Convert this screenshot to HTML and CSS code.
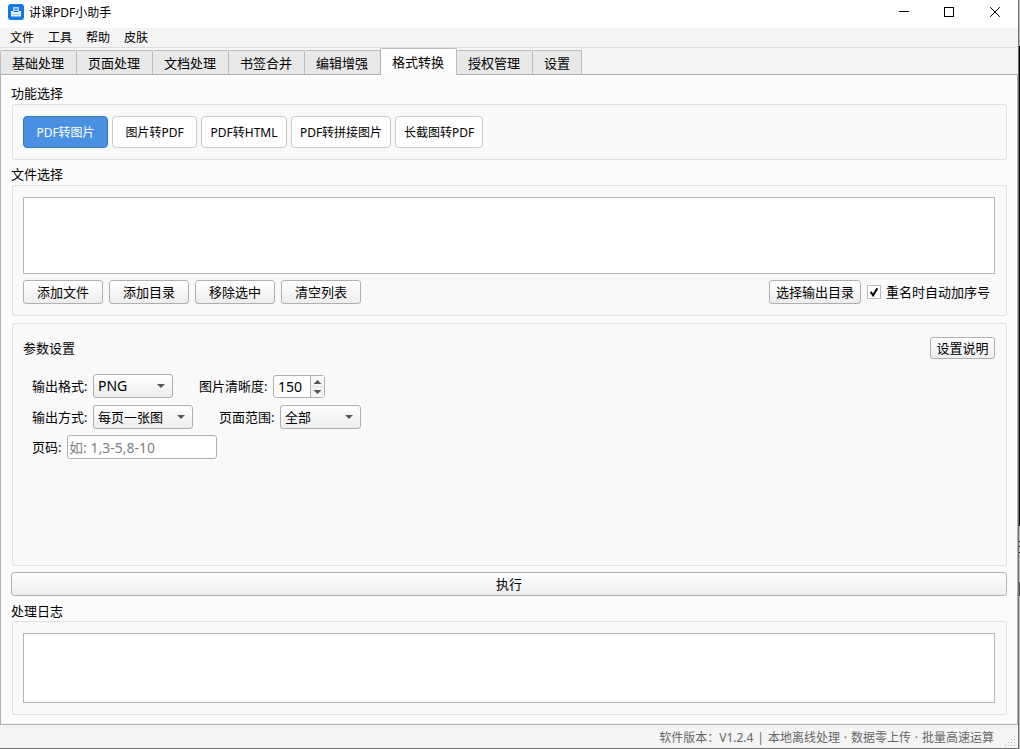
FILE: index.html
```
<!DOCTYPE html>
<html lang="zh-CN">
<head>
    <meta charset="UTF-8">
    <meta name="viewport" content="width=device-width, initial-scale=1.0">
    <title>讲课PDF小助手</title>
    <link rel="stylesheet" href="styles.css">
</head>
<body>
    <div class="window">
        <header class="titlebar">
            <svg class="app-icon" width="16" height="16" viewBox="0 0 16 16">
                <rect width="16" height="16" rx="3" fill="#1479e0"/>
                <path d="M5 3h6v4H5z" fill="#a9d2fa"/>
                <path d="M3 7h2.5v1h5V7H13v5.5H3z" fill="#e6f2fe"/>
                <path d="M6.5 5h3" stroke="#1479e0" fill="none"/>
                <path d="M4 10.5h8" stroke="#9ccaf8" fill="none"/>
            </svg>
            <span class="title">讲课PDF小助手</span>
            <svg class="controls" width="102" height="10" viewBox="0 0 102 10" fill="none" stroke="#000">
                <path d="M0 4.5h10M45.5.5h9v9h-9z" shape-rendering="crispEdges"/>
                <path d="M91.2.2l9.6 9.6M100.8.2l-9.6 9.6"/>
            </svg>
        </header>

        <nav class="menubar">
            <span>文件</span>
            <span>工具</span>
            <span>帮助</span>
            <span>皮肤</span>
        </nav>

        <div class="tabs">
            <div class="tab">基础处理</div>
            <div class="tab">页面处理</div>
            <div class="tab">文档处理</div>
            <div class="tab">书签合并</div>
            <div class="tab">编辑增强</div>
            <div class="tab active">格式转换</div>
            <div class="tab">授权管理</div>
            <div class="tab">设置</div>
        </div>

        <main class="pane">
            <div class="group-title">功能选择</div>
            <section class="group functions">
                <button class="func selected">PDF转图片</button>
                <button class="func">图片转PDF</button>
                <button class="func html">PDF转HTML</button>
                <button class="func stitch">PDF转拼接图片</button>
                <button class="func long">长截图转PDF</button>
            </section>

            <div class="group-title files-title">文件选择</div>
            <section class="group files">
                <div class="list"></div>
                <div class="file-actions">
                    <button class="btn">添加文件</button>
                    <button class="btn">添加目录</button>
                    <button class="btn">移除选中</button>
                    <button class="btn">清空列表</button>
                    <button class="btn output">选择输出目录</button>
                    <label class="check">
                        <svg width="14" height="14" viewBox="0 0 14 14">
                            <rect x=".5" y=".5" width="13" height="13" fill="#fff" stroke="#b8b8b8"/>
                            <path d="M3.6 6.8l2.5 3.6 4.2-7.2" fill="none" stroke="#000" stroke-width="2"/>
                        </svg>
                        重名时自动加序号
                    </label>
                </div>
            </section>

            <section class="group params">
                <div class="params-head">
                    <span>参数设置</span>
                    <button class="btn help">设置说明</button>
                </div>
                <div class="row">
                    <span class="label">输出格式:</span>
                    <div class="combo format">PNG</div>
                    <span class="label dpi">图片清晰度:</span>
                    <div class="spin">
                        <span class="value">150</span>
                        <svg class="steps" width="13" height="21" viewBox="0 0 13 21" fill="#555">
                            <path d="M2.5 8L6.5 4l4 4zM2.5 14l4 4 4-4z"/>
                            <path d="M0 10h13v1H0z" fill="#e2e2e2"/>
                        </svg>
                    </div>
                </div>
                <div class="row">
                    <span class="label">输出方式:</span>
                    <div class="combo mode">每页一张图</div>
                    <span class="label range">页面范围:</span>
                    <div class="combo pages">全部</div>
                </div>
                <div class="row">
                    <span class="label page-no">页码:</span>
                    <input class="page-input" type="text" placeholder="如: 1,3-5,8-10">
                </div>
            </section>

            <button class="btn run">执行</button>

            <div class="group-title log-title">处理日志</div>
            <section class="group log">
                <div class="list"></div>
            </section>
        </main>

        <footer class="statusbar">
            <span>软件版本：V1.2.4 | 本地离线处理 · 数据零上传 · 批量高速运算</span>
            <svg class="grip" width="10" height="10" viewBox="0 0 10 10" fill="#b8b8b8" shape-rendering="crispEdges">
                <path d="M9 0h1v1H9zM6 3h1v1H6zM9 3h1v1H9zM3 6h1v1H3zM6 6h1v1H6zM9 6h1v1H9zM0 9h1v1H0zM3 9h1v1H3zM6 9h1v1H6zM9 9h1v1H9z"/>
            </svg>
        </footer>
    </div>
    <div class="desktop"></div>
</body>
</html>
```
FILE: styles.css
```
* {
    box-sizing: border-box;
}

body {
    margin: 0;
    width: 1020px;
    height: 749px;
    overflow: hidden;
    display: flex;
    font-family: "Noto Sans", "Noto Sans CJK SC", sans-serif;
    font-size: 13px;
    line-height: 18px;
    color: #000;
}

button, input {
    font: inherit;
    color: inherit;
    padding: 0;
}

.window {
    width: 1019px;
    height: 749px;
    display: flex;
    flex-direction: column;
    background: #f4f4f4;
    border-right: 1px solid #707070;
    border-bottom: 1px solid #707070;
}

/* strip of the desktop beside the window */
.desktop {
    width: 1px;
    background: linear-gradient(#c0c0c0 46px, #000 46px, #000 526px, #c0c0c0 526px,
        #c0c0c0 541px, #000 541px, #000 542px, #c0c0c0 542px,
        #c0c0c0 546px, #000 546px, #000 547px, #c0c0c0 547px,
        #c0c0c0 552px, #000 552px, #000 553px, #c0c0c0 553px,
        #c0c0c0 582px, #555 582px, #555 596px, #c0c0c0 596px);
}

.titlebar {
    height: 28px;
    display: flex;
    align-items: center;
    padding: 0 17px 4px 8px;
    background: #fff;
    font-size: 12px;
}

.title {
    margin-left: 5px;
    padding-top: 2px;
}

.controls {
    margin-left: auto;
}

.menubar {
    height: 20px;
    display: flex;
    gap: 14px;
    padding-left: 10px;
    border-bottom: 1px solid #dcdcdc;
    font-size: 12px;
    line-height: 20px;
}

.tabs {
    height: 27px;
    display: flex;
    align-items: flex-end;
    border-bottom: 1px solid #b0b0b0;
}

.tab {
    height: 24px;
    padding: 0 12px 0 11px;
    border: 1px solid #bcbcbc;
    border-left: 0;
    border-bottom: 0;
    border-radius: 2px 2px 0 0;
    background: #e8e8e8;
    line-height: 24px;
}

.tab:first-child {
    padding-left: 11px;
    border-left: 1px solid #bcbcbc;
}

.tab:last-child {
    padding-right: 11px;
}

.tab.active {
    height: 27px;
    margin: 0 0 -1px -1px;
    border-left: 1px solid #b0b0b0;
    background: linear-gradient(#fff, #fcfcfc);
    line-height: 26px;
}

.pane {
    flex: none;
    height: 650px;
    padding: 9px 10px 0 10px;
    border: 1px solid #b0b0b0;
    border-top: 0;
    background: #fcfcfc;
}

.group-title {
    height: 19px;
}

.files-title {
    margin-top: 5px;
}

.group {
    margin-left: 1px;
    padding: 11px 11px 0 10px;
    border: 1px solid #e0e0e0;
    border-radius: 2px;
    background: #f9f9f9;
}

.functions {
    height: 56px;
    display: flex;
    gap: 4px;
    margin-top: 1px;
}

.func {
    width: 85px;
    height: 32px;
    padding-top: 2px;
    border: 1px solid #ccc;
    border-radius: 4px;
    background: #fff;
    font-size: 12px;
}

.func.selected {
    border-color: #357abd;
    background: #4a90e2;
    color: #fff;
}

.func.html {
    width: 86px;
}

.func.stitch {
    width: 100px;
}

.func.long {
    width: 88px;
}

.files {
    height: 131px;
    margin-top: 1px;
}

.list {
    height: 77px;
    border: 1px solid #b8b8b8;
    background: #fff;
}

.file-actions {
    display: flex;
    gap: 6px;
    margin-top: 6px;
}

.btn {
    width: 80px;
    height: 24px;
    border: 1px solid #b0b0b0;
    border-radius: 3px;
    background: linear-gradient(#fff, #ededed);
}

.btn.output {
    width: 92px;
    margin-left: auto;
}

.check {
    display: flex;
    align-items: center;
    gap: 5px;
    padding-right: 5px;
}

.params {
    height: 243px;
    margin-top: 7px;
    padding-top: 13px;
}

.params-head {
    display: flex;
    align-items: center;
    justify-content: space-between;
    margin-bottom: 15px;
}

.btn.help {
    width: 65px;
    height: 22px;
}

.row {
    height: 24px;
    display: flex;
    align-items: center;
    margin: 0 0 6px 9px;
}

.row + .row {
    margin-top: 7px;
}

.row:last-child {
    margin-top: 6px;
}

.label {
    width: 61px;
    white-space: nowrap;
}

.label.dpi {
    width: 74px;
    margin-left: 26px;
}

.label.range {
    margin-left: 26px;
}

.label.page-no {
    width: 35px;
}

.combo {
    height: 24px;
    display: flex;
    align-items: center;
    justify-content: space-between;
    padding: 0 7px 0 4px;
    border: 1px solid #b0b0b0;
    border-radius: 3px;
    background: linear-gradient(#fff, #ededed);
}

.combo::after {
    content: "";
    border: 4px solid transparent;
    border-top-color: #555;
    border-bottom: 0;
}

.combo.format {
    width: 80px;
    font-size: 14px;
}

.combo.mode {
    width: 100px;
}

.combo.pages {
    width: 81px;
}

.spin {
    width: 52px;
    height: 23px;
    display: flex;
    margin-top: 1px;
    border: 1px solid #b0b0b0;
    border-radius: 3px;
    background: #fff;
}

.value {
    flex: 1;
    padding-left: 4px;
    border-right: 1px solid #b0b0b0;
    font-size: 14px;
    line-height: 22px;
}

.steps {
    background: #f6f6f6;
}

.page-input {
    width: 150px;
    height: 24px;
    padding: 0 1px;
    border: 1px solid #b0b0b0;
    border-radius: 3px;
    background: #fff;
    font-size: 14px;
}

.page-input::placeholder {
    color: #808080;
}

.btn.run {
    display: block;
    width: 996px;
    margin-top: 6px;
}

.log-title {
    margin-top: 6px;
}

.log {
    height: 94px;
}

.log .list {
    height: 70px;
}

.statusbar {
    flex: 1;
    min-height: 0;
    display: flex;
    justify-content: flex-end;
    padding-right: 3px;
    color: #666;
    font-size: 12px;
    line-height: 25px;
    word-spacing: 0.8px;
}

.grip {
    margin: 11px 0 0 11px;
}
```
